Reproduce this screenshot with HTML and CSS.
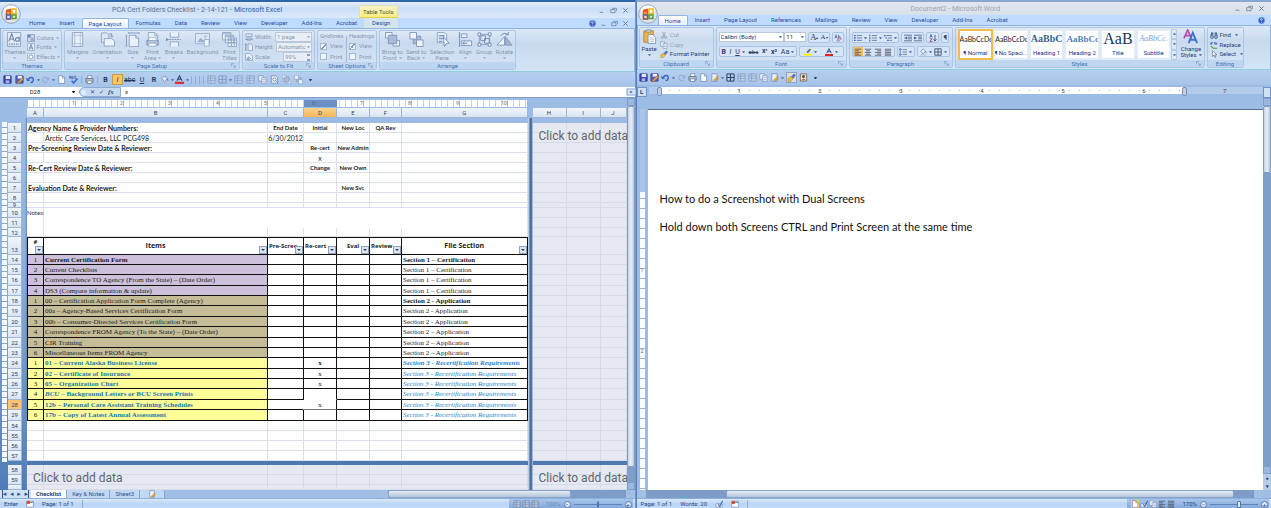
FILE: index.html
```html
<!DOCTYPE html>
<html lang="en">
<head>
<meta charset="utf-8">
<title>Dual screens</title>
<link rel="stylesheet" href="styles.css">
</head>
<body>
<svg class="defs" aria-hidden="true">
  <symbol id="orb" viewBox="0 0 20 20"><circle cx="10" cy="10" r="9.3" fill="#dfe5ee" stroke="#8793a8" stroke-width=".8"/><ellipse cx="10" cy="6" rx="7" ry="4.5" fill="#fff"/><path d="M5 6l5-1.500v4H5z" fill="#e2581d"/><path d="M5.500 6.500h4v3.500h-4zM5.500 11h4v4h-4z" fill="none" stroke="#e2581d" stroke-width="1.500"/><path d="M11 5h4v4.500h-4z" fill="none" stroke="#f6b51b" stroke-width="1.500"/><path d="M11 11h4v3.500h-4z" fill="none" stroke="#5a9a2c" stroke-width="1.500"/><path d="M5.500 11h4v4h-4z" fill="none" stroke="#3674c2" stroke-width="1.200"/></symbol>
  <symbol id="themes" viewBox="0 0 16 16"><path d="M.5.5h14v15H.5z" fill="#e2ebf6" stroke="#8fa6c6"/><path d="M2 10l3-8 3 8M3 7.500h4M13 5v5M13 7.500a2 2 0 1 0 0 1" fill="none" stroke="#7187ab" stroke-width="1.200"/><path d="M2 13h11" stroke="#8ea4c4" stroke-width="2" stroke-dasharray="1.500 1"/></symbol>
  <symbol id="colors" viewBox="0 0 9 9"><path d="M.5.5h8v8h-8z" fill="#c9d7e9" stroke="#8ba2c4"/><path d="M1 1h3v3H1z" fill="#6b83ab"/><path d="M4 4h4v4H4z" fill="#9bb1d0"/></symbol>
  <symbol id="fonts" viewBox="0 0 9 9"><path d="M.5.5h8v8h-8z" fill="#e4ecf7" stroke="#9db1cf"/><path d="M2.500 7.500l2-6 2 6M3 5.500h3" fill="none" stroke="#6d85ad"/></symbol>
  <symbol id="effects" viewBox="0 0 9 9"><path d="M.5.5h8v8h-8z" fill="#e4ecf7" stroke="#a5b7d2"/><circle cx="4.500" cy="4.500" r="2.300" fill="#fff" stroke="#7c92b7"/></symbol>
  <symbol id="margins" viewBox="0 0 16 16"><path d="M2.500.5h11v15h-11z" fill="#e6eef8" stroke="#8fa6c8"/><path d="M5 1v14M11 1v14M3 3.500h10M3 12.500h10" stroke="#a7bad6" stroke-width=".8"/></symbol>
  <symbol id="orient" viewBox="0 0 16 16"><path d="M1.500 1h6l2 2v8h-8z" fill="#dde8f5" stroke="#8fa6c8"/><path d="M4.500 7h8l3 2.500V15h-11z" fill="#edf3fa" stroke="#8fa6c8"/><path d="M10 2h2.500v3M12.500 5.500L11 4M12.500 5.500L14 4" fill="none" stroke="#7990b7"/></symbol>
  <symbol id="size" viewBox="0 0 16 16"><path d="M4.500 3.500h7l3 3v9h-10z" fill="#e8f0f9" stroke="#8fa6c8"/><path d="M4 1h11M1.500 4v11M4 0v2M15 0v2M.5 4h2M.5 15h2M11.500 3.500v3h3" fill="none" stroke="#849cc1"/></symbol>
  <symbol id="parea" viewBox="0 0 16 16"><path d="M3.500.5h7l3 3v9h-10z" fill="#e8f0f9" stroke="#8fa6c8"/><path d="M10.500 1v3h3" fill="none" stroke="#8fa6c8"/><path d="M2 9h12v5H2z" fill="#b6c5dc" stroke="#768fb5"/><path d="M4 6h8v3H4zM4 12h8v3H4z" fill="#fff" stroke="#8fa6c8" stroke-width=".8"/></symbol>
  <symbol id="breaks" viewBox="0 0 16 16"><path d="M4.500.5v5h9v-5M4.500 15.500v-5h9v5" fill="#e8f0f9" stroke="#8fa6c8"/><path d="M3 8h13" stroke="#7b93b9" stroke-dasharray="2 1"/><path d="M0 6l3 2-3 2z" fill="#7b93b9"/></symbol>
  <symbol id="backg" viewBox="0 0 16 16"><path d="M.5 1.500h15v11H.5z" fill="#dce7f4" stroke="#9aafce"/><path d="M2 11l4-5 3 3 2-2 3 4z" fill="#9cb0ce"/><circle cx="11" cy="5" r="1.500" fill="#b4c4dc"/><path d="M10 8h5v7h-5z" fill="#eef4fb" stroke="#8fa6c8" stroke-width=".8"/></symbol>
  <symbol id="ptitles" viewBox="0 0 16 16"><path d="M.5.5h9v8h-9zM3.500 3.500h9v8h-9zM6.500 6.500h9v9h-9z" fill="#e8f0f9" stroke="#8fa6c8"/><path d="M1 2h8M4 5h8M7 8.500h8M7 11.500h8M10 7v8M13 7v8" stroke="#8ba2c4"/></symbol>
  <symbol id="wide" viewBox="0 0 9 9"><path d="M1 1h7v3H1zM2 5.500h5V8H2z" fill="#e1eaf6" stroke="#8fa6c8"/><path d="M0 7h9" stroke="#7f96bb"/></symbol>
  <symbol id="tall" viewBox="0 0 9 9"><path d="M3.500 1h3l2 2v5.500h-5z" fill="#e8f0f9" stroke="#8fa6c8"/><path d="M1 1v7M0 1.500h2M0 8h2" stroke="#748cb3"/></symbol>
  <symbol id="scale" viewBox="0 0 9 9"><path d="M.5.5h5l3 3v5h-8z" fill="#e8f0f9" stroke="#8fa6c8"/><path d="M2 5h3v3H2z" fill="#8ba2c4"/><path d="M4 4l3 3" stroke="#6f88b0"/></symbol>
  <symbol id="front" viewBox="0 0 16 16"><path d="M.5.5h7v6h-7zM8.500 9h7v6h-7z" fill="#f0f5fb" stroke="#8097bc"/><path d="M3.500 3.500h9v9h-9z" fill="#a9bbd7" stroke="#8097bc"/></symbol>
  <symbol id="back" viewBox="0 0 16 16"><path d="M4.500 4.500h8v8h-8z" fill="#a9bbd7" stroke="#8097bc"/><path d="M1 .5h7v7H1zM8 8.500h7v7H8z" fill="#f0f5fb" stroke="#8097bc"/></symbol>
  <symbol id="pane" viewBox="0 0 16 16"><path d="M2.500.5h7l3 2v9h-10z" fill="#e6eef8" stroke="#8fa6c8"/><path d="M4 4h6M4 7h6M4 10h4" stroke="#849bc0" stroke-width="1.500"/><path d="M9 5l6 7-3 .5-2 3z" fill="#fff" stroke="#758eb5"/></symbol>
  <symbol id="align" viewBox="0 0 16 16"><path d="M1.500 0v16" stroke="#748cb3"/><path d="M3.500 2h6v4h-6zM3.500 9.500h11v5h-11z" fill="#e6eef8" stroke="#8299be"/><path d="M10 12H5m2-2l-2 2 2 2" fill="none" stroke="#7189b0"/></symbol>
  <symbol id="group" viewBox="0 0 16 16"><path d="M2.500 2.500h11v11h-11z" fill="none" stroke="#8ba2c4"/><path d="M4 4h5v5H4zM8 7h5v5H8z" fill="#dde8f4" stroke="#748cb3"/><path d="M1 1h3v3H1zM12 1h3v3h-3zM1 12h3v3H1zM12 12h3v3h-3z" fill="#f6f9fd" stroke="#748cb3"/></symbol>
  <symbol id="rotate" viewBox="0 0 16 16"><path d="M8 5v9H0z" fill="#f0f5fb" stroke="#8299be"/><path d="M9 5l7 9H9z" fill="#a1b4d1" stroke="#8299be"/><path d="M4 4a5 5 0 0 1 8-1M12 0v3H9" fill="none" stroke="#7189b0"/></symbol>
  <symbol id="save" viewBox="0 0 10 10"><path d="M1 1h8v8H1z" fill="#4248b4" stroke="#2c3190"/><path d="M3 1h5v3.500H3z" fill="#dfe7f8"/><path d="M3 6h4v3H3z" fill="#a9b8e3"/></symbol>
  <symbol id="saveas" viewBox="0 0 10 10"><path d="M1 1h8v8H1z" fill="#5b62ba" stroke="#3d4398"/><path d="M3 1h5v3H3z" fill="#e8edf8"/><path d="M2 9l6-6 1.500 1.500L4 9.500z" fill="#f2ad42" stroke="#8d5e26" stroke-width=".6"/></symbol>
  <symbol id="undo" viewBox="0 0 10 10"><path d="M2.500 5C4 2 9 2 8 6 7.500 7.500 6 8.500 5 8.500" fill="none" stroke="#3c65c7" stroke-width="1.600"/><path d="M0 3l1 4 4-1z" fill="#3c65c7"/></symbol>
  <symbol id="redo" viewBox="0 0 10 10"><path d="M7.500 4C6 2 2 2 2 5.500 2 8 5 9 7 8" fill="none" stroke="#93aed8" stroke-width="1.300"/><path d="M9 2v4H5.500z" fill="#93aed8"/></symbol>
  <symbol id="doc" viewBox="0 0 10 10"><path d="M2 .8h4l2.500 2.500v6H2z" fill="#fff" stroke="#6e87b3" stroke-width=".8"/><path d="M6 1v2.500h2.500" fill="none" stroke="#6e87b3" stroke-width=".8"/></symbol>
  <symbol id="spell" viewBox="0 0 10 10"><path d="M0 4l1-3 1 3M3 1v3h1.500V1M8 1.500H6.500V4H8" fill="none" stroke="#334f94" stroke-width=".8"/><path d="M3 6.500l2 2.500 4.500-5" fill="none" stroke="#3c69c9" stroke-width="1.700"/></symbol>
  <symbol id="eraser" viewBox="0 0 10 10"><path d="M1 5.500l1.500-4.500L4 5.500M1.500 4h2M5.500 1v4.500h2V3H5.500" fill="none" stroke="#455a86" stroke-width=".8"/><path d="M3 8l4-3.500 2.500 1.500L5.500 9.500z" fill="#e9a6bd" stroke="#7b6f98" stroke-width=".7"/></symbol>
  <symbol id="print" viewBox="0 0 10 10"><path d="M3 .8h4.500v3H3z" fill="#fff" stroke="#647894" stroke-width=".7"/><path d="M1 4h8v4H1z" fill="#bcc6d4" stroke="#54667f" stroke-width=".8"/><path d="M2.500 6.500h5v3h-5z" fill="#fff" stroke="#54667f" stroke-width=".7"/></symbol>
  <symbol id="bucket" viewBox="0 0 10 10"><path d="M2 4l3-3 3.500 3L5 7.500z" fill="#dfe8f4" stroke="#72849d" stroke-width=".8"/><path d="M8 4l1 2.500" stroke="#4c77bd"/><path d="M1 8.500h8" stroke="#b4c4dc" stroke-width="1.600"/></symbol>
  <symbol id="hl" viewBox="0 0 10 10"><path d="M3 5l4-4 2 1-4 4.500z" fill="#5b6b8a"/><path d="M0 8.500h10" stroke="#fff200" stroke-width="2.600"/></symbol>
  <symbol id="fcol" viewBox="0 0 10 10"><path d="M2.200 6.500L5 .8l2.800 5.700M3.300 4.600h3.400" fill="none" stroke="#31497c" stroke-width="1.200"/><path d="M0 8.700h10" stroke="#e42222" stroke-width="2.300"/></symbol>
  <symbol id="grid" viewBox="0 0 10 10"><path d="M1 1h8v8H1zM5 1v8M1 5h8" fill="none" stroke="currentColor"/></symbol>
  <symbol id="sheet" viewBox="0 0 10 10"><path d="M1 1h8v8H1z" fill="#c2d2e8" stroke="currentColor" stroke-width=".8"/><path d="M1 3.500h8M1 6h8M4 1v8" stroke="currentColor" stroke-width=".8"/></symbol>
  <symbol id="pages" viewBox="0 0 10 10"><path d="M.8.800h5v6h-5z" fill="#e9f0f9" stroke="#8095b7" stroke-width=".8"/><path d="M4 3h5v6.200H4z" fill="#f2f6fc" stroke="#8095b7" stroke-width=".8"/><path d="M5 5h3M5 7h3" stroke="#8095b7" stroke-width=".7"/></symbol>
  <symbol id="look" viewBox="0 0 10 10"><path d="M1.500.8h5l2 2v6.400h-7z" fill="#e8eef7" stroke="#7389ad" stroke-width=".8"/><circle cx="5" cy="5" r="1.800" fill="#fff" stroke="#7389ad"/><path d="M6.500 6.500l2.500 2.500" stroke="#7389ad"/></symbol>
  <symbol id="edit" viewBox="0 0 10 10"><path d="M2 .8h6v8.400H2z" fill="#e8eef7" stroke="#7389ad" stroke-width=".8"/><path d="M4 8l4-4 1.500 1.500L6 9z" fill="#efa839" stroke="#8b6b35" stroke-width=".5"/></symbol>
  <symbol id="paste" viewBox="0 0 14 16"><path d="M1 2h10v12H1z" fill="#edb453" stroke="#bb812d"/><path d="M3.500.8h5v2.500h-5z" fill="#d7dce5" stroke="#7c8797" stroke-width=".8"/><path d="M5.500 6h5l3 3v6.500h-8z" fill="#fff" stroke="#6d84ac" stroke-width=".8"/><path d="M7 9.500h5M7 11.500h5M7 13.500h5" stroke="#8fa6cb" stroke-width=".7"/></symbol>
  <symbol id="cut" viewBox="0 0 10 10"><path d="M3 1l3 6M7 1L4 7" stroke="#8f9bae" fill="none"/><circle cx="3" cy="8" r="1.300" fill="none" stroke="#8f9bae"/><circle cx="7" cy="8" r="1.300" fill="none" stroke="#8f9bae"/></symbol>
  <symbol id="brush" viewBox="0 0 10 10"><path d="M1 6l3-2 3 2-3 3.500H1z" fill="#f0bd43" stroke="#b18221" stroke-width=".6"/><path d="M5 4l3-3 1.500 1.500-2.500 3z" fill="#5b7bc0" stroke="#33508e" stroke-width=".6"/></symbol>
  <symbol id="bul" viewBox="0 0 10 10"><path d="M0 2h2M0 5h2M0 8h2" stroke="#3961b0" stroke-width="1.600"/><path d="M3.500 2H10M3.500 5H10M3.500 8H10" stroke="#5b6e8f"/></symbol>
  <symbol id="num" viewBox="0 0 10 10"><path d="M1 .8v2.400M1 4v2.400M1 7v2.400" stroke="#3961b0" stroke-width="1.200"/><path d="M3.500 2H10M3.500 5H10M3.500 8H10" stroke="#5b6e8f"/></symbol>
  <symbol id="multi" viewBox="0 0 10 10"><path d="M0 2h2M2 5h2M4 8h2" stroke="#3961b0" stroke-width="1.500"/><path d="M3 2h7M5 5h5M7 8h3" stroke="#5b6e8f"/></symbol>
  <symbol id="outdent" viewBox="0 0 10 10"><path d="M0 1.500h10M5 4h5M5 6h5M0 8.500h10" stroke="#46597b"/><path d="M4 3v4L0 5z" fill="#3467bd"/></symbol>
  <symbol id="indent" viewBox="0 0 10 10"><path d="M0 1.500h10M5 4h5M5 6h5M0 8.500h10" stroke="#46597b"/><path d="M0 3v4l4-2z" fill="#3467bd"/></symbol>
  <symbol id="sort" viewBox="0 0 10 10"><path d="M1 4.500l1.500-4 1.500 4M1.500 3.200h2" fill="none" stroke="#3467bd"/><path d="M1 6h3L1 9.300h3.500" fill="none" stroke="#8a3e9b"/><path d="M7.500 1v7M5.800 6.500L7.500 9l1.700-2.500" fill="none" stroke="#33456a"/></symbol>
  <symbol id="left" viewBox="0 0 10 10"><path d="M1 1.500h8M1 3.500h5M1 5.500h8M1 7.500h5M1 9h8" stroke="#4b5464"/></symbol>
  <symbol id="center" viewBox="0 0 10 10"><path d="M1 1.500h8M2.500 3.500h5M1 5.500h8M2.500 7.500h5M1 9h8" stroke="#4b5464"/></symbol>
  <symbol id="right" viewBox="0 0 10 10"><path d="M1 1.500h8M4 3.500h5M1 5.500h8M4 7.500h5M1 9h8" stroke="#4b5464"/></symbol>
  <symbol id="just" viewBox="0 0 10 10"><path d="M1 1.500h8M1 3.500h8M1 5.500h8M1 7.500h8M1 9h8" stroke="#4b5464"/></symbol>
  <symbol id="space" viewBox="0 0 10 10"><path d="M1.500 1v8M0 2.500L1.500.500 3 2.500M0 7.500l1.500 2 1.500-2" fill="none" stroke="#3467bd"/><path d="M4.500 2H10M4.500 5H10M4.500 8H10" stroke="#5b6e8f"/></symbol>
  <symbol id="find" viewBox="0 0 10 10"><path d="M2.500 1.500L1 6M7.500 1.500L9 6M3.500 2v4M6.500 2v4" stroke="#4d6c9d" stroke-width="1.500"/><circle cx="2.500" cy="7.500" r="1.800" fill="#b8cde9" stroke="#3b5787"/><circle cx="7.500" cy="7.500" r="1.800" fill="#b8cde9" stroke="#3b5787"/></symbol>
  <symbol id="repl" viewBox="0 0 10 10"><path d="M1 5V2h3M1 3.500h2M6 1v3h2.500V2.500H6" fill="none" stroke="#3d62a8"/><path d="M1 6.500l3 2.500h5" fill="none" stroke="#4c9b45" stroke-width="1.300"/></symbol>
  <symbol id="cursor" viewBox="0 0 10 10"><path d="M3 .8v7.400L5 6.500l1.500 3 1-.6L6 6h2.500z" fill="#fff" stroke="#506686" stroke-width=".8"/></symbol>
  <symbol id="chst" viewBox="0 0 16 16"><path d="M1 10L5 1l4 9M2.500 7h5" fill="none" stroke="#b44fb0" stroke-width="1.800"/><path d="M6 15l4.500-11L15 15M7.500 11.500h6" fill="none" stroke="#3b74c9" stroke-width="2"/></symbol>
  <symbol id="help" viewBox="0 0 10 10"><circle cx="5" cy="5" r="4.500" fill="#2e5fc8" stroke="#85a6e2" stroke-width=".8"/><path d="M3.500 4q0-2 1.700-1.700 2 .5 0 2.500v1M5 6.800v1.200" fill="none" stroke="#fff"/></symbol>
  <symbol id="min" viewBox="0 0 8 8"><path d="M2 6h4" stroke="#6c7f9c"/></symbol>
  <symbol id="max" viewBox="0 0 8 8"><path d="M2.500 1.500h5v3M.8 3h5v3.500h-5z" fill="none" stroke="#6c7f9c" stroke-width=".9"/></symbol>
  <symbol id="close" viewBox="0 0 8 8"><path d="M1.500 1.500l5 5M6.500 1.500l-5 5" stroke="#6c7f9c" stroke-width="1.100"/></symbol>
  <symbol id="launch" viewBox="0 0 6 6"><path d="M.5 4V.5H4" fill="none" stroke="#7b99c6" stroke-width=".8"/><path d="M2 2l3 3M5.200 3v2.200H3" fill="none" stroke="#7b99c6" stroke-width=".8"/></symbol>
  <symbol id="macro" viewBox="0 0 10 10"><path d="M.8 1.500h8.400v7.500H.8z" fill="#fff" stroke="#6681b0" stroke-width=".8"/><path d="M1 3h8" stroke="#7a96c6" stroke-width="1.500"/><circle cx="3" cy="3" r="2.200" fill="#dc492e"/></symbol>
  <symbol id="stamp" viewBox="0 0 10 10"><path d="M1.500 1h7v8h-7z" fill="#f3e3c8" stroke="#5d5560" stroke-width=".8"/><circle cx="5" cy="3.800" r="1.700" fill="#6b4a3a"/><path d="M2.500 8q2.500-3.500 5 0z" fill="#c8502f"/></symbol>
  <symbol id="proof" viewBox="0 0 10 10"><path d="M1 5q2-1.500 4 0 2-1.500 4 0v4H1z" fill="#e9f0fa" stroke="#6881ad" stroke-width=".8"/><path d="M4 5.500L6 8l3.500-7" fill="none" stroke="#3c62b6" stroke-width="1.300"/></symbol>
</svg>

<main class="desk">
<section class="win excel">
  <header class="title">
    <button class="orb" aria-label="Office button"><svg><use href="#orb"/></svg></button>
    <h1>PCA Cert Folders Checklist - 2-14-121 - <b>Microsoft Excel</b></h1>
    <span class="tools">Table Tools</span>
    <div class="ctl"><button aria-label="Minimize"><svg><use href="#min"/></svg></button><button aria-label="Restore"><svg><use href="#max"/></svg></button><button aria-label="Close"><svg><use href="#close"/></svg></button></div>
  </header>
  <nav class="tabs">
    <a href="#">Home</a><a href="#">Insert</a><a href="#" class="on">Page Layout</a><a href="#">Formulas</a><a href="#">Data</a><a href="#">Review</a><a href="#">View</a><a href="#">Developer</a><a href="#">Add-Ins</a><a href="#">Acrobat</a><a href="#" class="design">Design</a>
    <div class="ctl"><button aria-label="Help"><svg><use href="#help"/></svg></button><button aria-label="Minimize workbook"><svg><use href="#min"/></svg></button><button aria-label="Restore workbook"><svg><use href="#max"/></svg></button><button aria-label="Close workbook"><svg><use href="#close"/></svg></button></div>
  </nav>
  <div class="ribbon off">
    <div class="grp g-themes"><div class="in">
      <button class="big"><svg><use href="#themes"/></svg>Themes<i class="dd"></i></button>
      <div class="stack"><button><svg><use href="#colors"/></svg>Colors<i class="dd"></i></button><button><svg><use href="#fonts"/></svg>Fonts<i class="dd"></i></button><button><svg><use href="#effects"/></svg>Effects<i class="dd"></i></button></div>
    </div><footer>Themes</footer></div>
    <div class="grp g-setup"><div class="in spread">
      <button class="big"><svg><use href="#margins"/></svg>Margins<i class="dd"></i></button>
      <button class="big"><svg><use href="#orient"/></svg>Orientation<i class="dd"></i></button>
      <button class="big"><svg><use href="#size"/></svg>Size<i class="dd"></i></button>
      <button class="big"><svg><use href="#parea"/></svg>Print<span>Area<i class="dd"></i></span></button>
      <button class="big"><svg><use href="#breaks"/></svg>Breaks<i class="dd"></i></button>
      <button class="big"><svg><use href="#backg"/></svg>Background</button>
      <button class="big"><svg><use href="#ptitles"/></svg>Print<span>Titles</span></button>
    </div><footer>Page Setup<svg><use href="#launch"/></svg></footer></div>
    <div class="grp g-scale"><div class="in stack">
      <div class="field"><svg><use href="#wide"/></svg><label for="fw">Width:</label><span class="sel"><select id="fw"><option>1 page</option></select><i class="dd"></i></span></div>
      <div class="field"><svg><use href="#tall"/></svg><label for="fh">Height:</label><span class="sel"><select id="fh"><option>Automatic</option></select><i class="dd"></i></span></div>
      <div class="field"><svg><use href="#scale"/></svg><label for="fs">Scale:</label><span class="sel short"><input id="fs" value="99%"><i class="spin"></i></span></div>
    </div><footer>Scale to Fit<svg><use href="#launch"/></svg></footer></div>
    <div class="grp g-opts"><div class="in">
      <fieldset><legend>Gridlines</legend><label><input type="checkbox" checked>View</label><label><input type="checkbox">Print</label></fieldset>
      <fieldset><legend>Headings</legend><label><input type="checkbox" checked>View</label><label><input type="checkbox">Print</label></fieldset>
    </div><footer>Sheet Options<svg><use href="#launch"/></svg></footer></div>
    <div class="grp g-arr"><div class="in spread">
      <button class="big"><svg><use href="#front"/></svg>Bring to<span>Front<i class="dd"></i></span></button>
      <button class="big"><svg><use href="#back"/></svg>Send to<span>Back<i class="dd"></i></span></button>
      <button class="big"><svg><use href="#pane"/></svg>Selection<span>Pane</span></button>
      <button class="big"><svg><use href="#align"/></svg>Align<i class="dd"></i></button>
      <button class="big"><svg><use href="#group"/></svg>Group<i class="dd"></i></button>
      <button class="big"><svg><use href="#rotate"/></svg>Rotate<i class="dd"></i></button>
    </div><footer>Arrange</footer></div>
  </div>
  <div class="qat">
    <button aria-label="Save"><svg><use href="#save"/></svg></button><button aria-label="Save as"><svg><use href="#saveas"/></svg></button><button aria-label="Undo"><svg><use href="#undo"/></svg><i class="dd"></i></button><button aria-label="Redo"><svg><use href="#redo"/></svg><i class="dd"></i></button><button aria-label="New"><svg><use href="#doc"/></svg></button><button aria-label="Spelling"><svg><use href="#spell"/></svg></button><i class="bar"></i><button class="dim" aria-label="Print"><svg><use href="#print"/></svg></button><i class="bar"></i><button><b>B</b></button><button class="hot"><i>I</i></button><button><s>abc</s></button><button><u>U</u></button><button><b>R</b></button><button class="dim" aria-label="Fill"><svg><use href="#bucket"/></svg><i class="dd"></i></button><button aria-label="Font colour"><svg><use href="#fcol"/></svg><i class="dd"></i></button><i class="bar"></i><i class="bar"></i><i class="bar"></i><i class="bar"></i><button class="dim" aria-label="Table"><svg><use href="#sheet"/></svg></button><button class="dim" aria-label="Borders"><svg><use href="#grid"/></svg><i class="dd"></i></button><button class="dim" aria-label="Insert row"><svg><use href="#sheet"/></svg></button><button class="dim" aria-label="Insert column"><svg><use href="#sheet"/></svg></button><button class="dim" aria-label="Copy"><svg><use href="#pages"/></svg></button><button class="dim" aria-label="Preview"><svg><use href="#look"/></svg></button><button class="dim" aria-label="Forward"><svg><use href="#front"/></svg></button><button class="dim" aria-label="Backward"><svg><use href="#back"/></svg></button><i class="dd more"></i>
  </div>
  <div class="fx">
    <input class="name" aria-label="Name box" value="D28"><i class="dd"></i>
    <div class="pill"><span class="knob"></span><button>✕</button><button>✓</button><button><em>fx</em></button></div>
    <input class="val" aria-label="Formula" value="x"><button class="exp" aria-label="Expand">»</button>
  </div>
  <div class="body">
    <div class="vrule"></div>
    <div class="pane">
      <div class="hrule"><span>1|</span><span>2|</span><span>3|</span><span>4|</span><span>5|</span><span>6|</span><span>7|</span><span>8|</span><span>9|</span><span>10|</span></div>
      <table class="sheet">
        <colgroup><col class="c-row"><col class="c-gap"><col class="c-a"><col class="c-b"><col class="c-c"><col class="c-d"><col class="c-d"><col class="c-f"><col><col class="c-gap"><col class="c-h"><col class="c-h"><col class="c-j"></colgroup>
        <thead><tr><td></td><td></td><th>A</th><th>B</th><th>C</th><th class="picked">D</th><th>E</th><th>F</th><th>G</th><td></td><th>H</th><th>I</th><th>J</th></tr></thead>
        <tbody>
        <tr class="air"><td></td><td class="edge" rowspan="38"></td><td colspan="7"></td><td class="edge dark" rowspan="38"></td><td colspan="3"></td></tr>
        <tr class="i"><th>1</th><td class="t">Agency Name &amp; Provider Numbers:</td><td></td><td>End Date</td><td>Initial</td><td>New Loc</td><td>QA Rev</td><td></td><td><span class="add">Click to add data</span></td><td></td><td></td></tr>
        <tr class="i n"><th>2</th><td></td><td>Arctic Care Services, LLC PCG498</td><td>6/30/2012</td><td></td><td></td><td></td><td></td><td></td><td></td><td></td></tr>
        <tr class="i"><th>3</th><td class="t">Pre-Screening Review Date &amp; Reviewer:</td><td></td><td></td><td>Re-cert</td><td>New Admin</td><td></td><td></td><td></td><td></td><td></td></tr>
        <tr class="i n"><th>4</th><td></td><td></td><td></td><td>x</td><td></td><td></td><td></td><td></td><td></td><td></td></tr>
        <tr class="i"><th>5</th><td class="t">Re-Cert Review Date &amp; Reviewer:</td><td></td><td></td><td>Change</td><td>New Own</td><td></td><td></td><td></td><td></td><td></td></tr>
        <tr class="i"><th>6</th><td></td><td></td><td></td><td></td><td></td><td></td><td></td><td></td><td></td><td></td></tr>
        <tr class="i"><th>7</th><td class="t">Evaluation Date &amp; Reviewer:</td><td></td><td></td><td></td><td>New Svc</td><td></td><td></td><td></td><td></td><td></td></tr>
        <tr class="i"><th>8</th><td></td><td></td><td></td><td></td><td></td><td></td><td></td><td></td><td></td><td></td></tr>
        <tr class="tiny"><th><span>9</span></th><td></td><td></td><td></td><td></td><td></td><td></td><td></td><td></td><td></td><td></td></tr>
        <tr class="notes"><th>10</th><td>Notes:</td><td colspan="6"></td><td></td><td></td><td></td></tr>
        <tr class="notes"><th>11</th><td></td><td colspan="6"></td><td></td><td></td><td></td></tr>
        <tr class="nine"><th>12</th><td></td><td></td><td></td><td></td><td></td><td></td><td></td><td></td><td></td><td></td></tr>
        <tr class="head"><th>13</th><td class="hash">#<button aria-label="Filter #"></button></td><td>Items<button aria-label="Filter items"></button></td><td class="l">Pre-Scree<button aria-label="Filter pre-screen"></button></td><td class="l">Re-cert<button aria-label="Filter re-cert"></button></td><td class="s">Eval<button aria-label="Filter eval"></button></td><td class="l">Review<button aria-label="Filter review"></button></td><td>File Section<button aria-label="Filter section"></button></td><td></td><td></td><td></td></tr>
        <tr class="ls p bold"><th>14</th><td>1</td><td>Current Certification Form</td><td></td><td></td><td></td><td></td><td>Section 1 – Certification</td><td></td><td></td><td></td></tr>
        <tr class="ls p"><th>15</th><td>2</td><td>Current Checklists</td><td></td><td></td><td></td><td></td><td>Section 1 – Certification</td><td></td><td></td><td></td></tr>
        <tr class="ls p"><th>16</th><td>3</td><td>Correspondence TO Agency (From the State) – (Date Order)</td><td></td><td></td><td></td><td></td><td>Section 1 – Certification</td><td></td><td></td><td></td></tr>
        <tr class="ls p"><th>17</th><td>4</td><td>DS3 (Compare information &amp; update)</td><td></td><td></td><td></td><td></td><td>Section 1 – Certification</td><td></td><td></td><td></td></tr>
        <tr class="ls o secb"><th>18</th><td>1</td><td>00 – Certification Application Form Complete (Agency)</td><td></td><td></td><td></td><td></td><td>Section 2 - Application</td><td></td><td></td><td></td></tr>
        <tr class="ls o"><th>19</th><td>2</td><td>00a – Agency-Based Services Certification Form</td><td></td><td></td><td></td><td></td><td>Section 2 - Application</td><td></td><td></td><td></td></tr>
        <tr class="ls o"><th>20</th><td>3</td><td>00b – Consumer-Directed Services Certification Form</td><td></td><td></td><td></td><td></td><td>Section 2 - Application</td><td></td><td></td><td></td></tr>
        <tr class="ls o"><th>21</th><td>4</td><td>Correspondence FROM Agency (To the State) – (Date Order)</td><td></td><td></td><td></td><td></td><td>Section 2 – Application</td><td></td><td></td><td></td></tr>
        <tr class="ls o"><th>22</th><td>5</td><td>CIR Training</td><td></td><td></td><td></td><td></td><td>Section 2 – Application</td><td></td><td></td><td></td></tr>
        <tr class="ls o"><th>23</th><td>6</td><td>Miscellaneous Items FROM Agency</td><td></td><td></td><td></td><td></td><td>Section 2 – Application</td><td></td><td></td><td></td></tr>
        <tr class="ls y secb"><th>24</th><td>1</td><td>01 – Current Alaska Business License</td><td></td><td><b>x</b></td><td></td><td></td><td>Section 3 - Recertification Requirements</td><td></td><td></td><td></td></tr>
        <tr class="ls y"><th>25</th><td>2</td><td>02 – Certificate of Insurance</td><td></td><td>x</td><td></td><td></td><td>Section 3 - Recertification Requirements</td><td></td><td></td><td></td></tr>
        <tr class="ls y"><th>26</th><td>3</td><td>05 – Organization Chart</td><td></td><td>x</td><td></td><td></td><td>Section 3 - Recertification Requirements</td><td></td><td></td><td></td></tr>
        <tr class="ls y above"><th>27</th><td>4</td><td><em>BCU</em> – Background Letters or BCU Screen Prints</td><td></td><td></td><td></td><td></td><td>Section 3 - Recertification Requirements</td><td></td><td></td><td></td></tr>
        <tr class="ls y cur"><th>28</th><td>5</td><td>12b – Personal Care Assistant Training Schedules</td><td></td><td>x</td><td></td><td></td><td>Section 3 - Recertification Requirements</td><td></td><td></td><td></td></tr>
        <tr class="ls y"><th>29</th><td>6</td><td>17b – Copy of Latest Annual Assessment</td><td></td><td></td><td></td><td></td><td>Section 3 - Recertification Requirements</td><td></td><td></td><td></td></tr>
        <tr class="i"><th>54</th><td></td><td></td><td></td><td></td><td></td><td></td><td></td><td></td><td></td><td></td></tr>
        <tr class="i"><th>55</th><td></td><td></td><td></td><td></td><td></td><td></td><td></td><td></td><td></td><td></td></tr>
        <tr class="i"><th>56</th><td></td><td></td><td></td><td></td><td></td><td></td><td></td><td></td><td></td><td></td></tr>
        <tr class="i"><th>57</th><td></td><td></td><td></td><td></td><td></td><td></td><td></td><td></td><td></td><td></td></tr>
        <tr class="split"><td></td><td colspan="7"></td><td colspan="3"></td></tr>
        <tr class="i next"><th>58</th><td><span class="add">Click to add data</span></td><td></td><td></td><td></td><td></td><td></td><td></td><td><span class="add">Click to add data</span></td><td></td><td></td></tr>
        <tr class="i next"><th>59</th><td></td><td></td><td></td><td></td><td></td><td></td><td></td><td></td><td></td><td></td></tr>
        <tr class="tiny next"><th></th><td></td><td></td><td></td><td></td><td></td><td></td><td></td><td></td><td></td><td></td></tr>
        </tbody>
      </table>
    </div>
    <div class="vbar"><i class="up"></i><i class="thumb"></i><i class="track"></i><i class="down"></i></div>
  </div>
  <div class="foot">
    <div class="nav"><button aria-label="First sheet">◂</button><button aria-label="Previous sheet">◂</button><button aria-label="Next sheet">▸</button><button aria-label="Last sheet">▸</button></div>
    <a href="#" class="st on">Checklist</a><a href="#" class="st">Key &amp; Notes</a><a href="#" class="st">Sheet3</a><a href="#" class="st" aria-label="Insert sheet"><svg><use href="#edit"/></svg></a>
    <div class="hbar"><i class="la"></i><i class="thumb"></i><i class="track"></i><i class="ra"></i></div>
  </div>
  <footer class="status"><span>Enter</span><svg><use href="#macro"/></svg><span>Page: 1 of 1</span><i class="bar"></i>
    <div class="zoom"><span class="views"><svg><use href="#sheet"/></svg><svg><use href="#sheet"/></svg><svg><use href="#sheet"/></svg></span><span class="faint">100%</span><button>−</button><input type="range" aria-label="Zoom" disabled><button>+</button></div>
  </footer>
</section>

<section class="win word">
  <header class="title">
    <button class="orb" aria-label="Office button"><svg><use href="#orb"/></svg></button>
    <h1>Document2 - Microsoft Word</h1>
    <div class="ctl"><button aria-label="Minimize"><svg><use href="#min"/></svg></button><button aria-label="Restore"><svg><use href="#max"/></svg></button><button aria-label="Close"><svg><use href="#close"/></svg></button></div>
  </header>
  <nav class="tabs">
    <a href="#" class="on">Home</a><a href="#">Insert</a><a href="#">Page Layout</a><a href="#">References</a><a href="#">Mailings</a><a href="#">Review</a><a href="#">View</a><a href="#">Developer</a><a href="#">Add-Ins</a><a href="#">Acrobat</a>
    <div class="ctl"><button aria-label="Help"><svg><use href="#help"/></svg></button></div>
  </nav>
  <div class="ribbon">
    <div class="grp g-clip"><div class="in">
      <button class="big"><svg><use href="#paste"/></svg>Paste<i class="dd"></i></button>
      <div class="stack"><button class="gray"><svg><use href="#cut"/></svg>Cut</button><button class="gray"><svg><use href="#pages"/></svg>Copy</button><button><svg><use href="#brush"/></svg>Format Painter</button></div>
    </div><footer>Clipboard<svg><use href="#launch"/></svg></footer></div>
    <div class="grp g-font"><div class="in rows">
      <div class="line"><span class="sel face"><select aria-label="Font"><option>Calibri (Body)</option></select><i class="dd"></i></span><span class="sel size"><select aria-label="Font size"><option>11</option></select><i class="dd"></i></span><div class="set"><button class="aa">A<sup>▴</sup></button><button class="aa sm">A<sup>▾</sup></button></div><div class="set"><button aria-label="Clear formatting"><svg><use href="#eraser"/></svg></button></div></div>
      <div class="line"><div class="set wide"><button><b>B</b></button><button><i>I</i></button><button><u>U</u><i class="dd"></i></button><button><s>abc</s></button><button><b>x<sub>₂</sub></b></button><button><b>x²</b></button><button>Aa<i class="dd"></i></button></div><div class="set"><button aria-label="Highlight"><svg><use href="#hl"/></svg><i class="dd"></i></button><button aria-label="Font colour"><svg><use href="#fcol"/></svg><i class="dd"></i></button></div></div>
    </div><footer>Font<svg><use href="#launch"/></svg></footer></div>
    <div class="grp g-para"><div class="in rows">
      <div class="line"><div class="set"><button aria-label="Bullets"><svg><use href="#bul"/></svg><i class="dd"></i></button><button aria-label="Numbering"><svg><use href="#num"/></svg><i class="dd"></i></button><button aria-label="Multilevel list"><svg><use href="#multi"/></svg><i class="dd"></i></button></div><div class="set"><button aria-label="Decrease indent"><svg><use href="#outdent"/></svg></button><button aria-label="Increase indent"><svg><use href="#indent"/></svg></button></div><div class="set"><button aria-label="Sort"><svg><use href="#sort"/></svg></button></div><div class="set"><button><b>¶</b></button></div></div>
      <div class="line"><div class="set"><button class="hot" aria-label="Left"><svg><use href="#left"/></svg></button><button aria-label="Center"><svg><use href="#center"/></svg></button><button aria-label="Right"><svg><use href="#right"/></svg></button><button aria-label="Justify"><svg><use href="#just"/></svg></button></div><div class="set"><button aria-label="Line spacing"><svg><use href="#space"/></svg><i class="dd"></i></button></div><div class="set"><button aria-label="Shading"><svg><use href="#bucket"/></svg><i class="dd"></i></button><button class="dim" aria-label="Borders"><svg><use href="#grid"/></svg><i class="dd"></i></button></div></div>
    </div><footer>Paragraph<svg><use href="#launch"/></svg></footer></div>
    <div class="grp g-styles"><div class="in">
      <div class="gallery">
        <button class="on"><span>AaBbCcDc</span>¶ Normal</button><button><span>AaBbCcDc</span>¶ No Spaci...</button><button class="h1"><span>AaBbC</span>Heading 1</button><button class="h2"><span>AaBbCc</span>Heading 2</button><button class="tt"><span>AaB</span>Title</button><button class="sub"><span>AaBbCc.</span>Subtitle</button>
      </div>
      <div class="scroll"><button aria-label="Up"><i class="dd flip"></i></button><button aria-label="Down"><i class="dd"></i></button><button aria-label="More"><i class="dd"></i></button></div>
      <button class="big"><svg><use href="#chst"/></svg>Change<span>Styles<i class="dd"></i></span></button>
    </div><footer>Styles<svg><use href="#launch"/></svg></footer></div>
    <div class="grp g-edit"><div class="in stack"><button><svg><use href="#find"/></svg>Find<i class="dd"></i></button><button><svg><use href="#repl"/></svg>Replace</button><button><svg><use href="#cursor"/></svg>Select<i class="dd"></i></button></div><footer>Editing</footer></div>
  </div>
  <div class="qat">
    <button aria-label="Save"><svg><use href="#save"/></svg></button><button aria-label="Save as"><svg><use href="#saveas"/></svg></button><button aria-label="Undo"><svg><use href="#undo"/></svg><i class="dd"></i></button><button aria-label="Redo"><svg><use href="#redo"/></svg></button><button aria-label="Print"><svg><use href="#print"/></svg></button><button aria-label="New"><svg><use href="#doc"/></svg></button><button aria-label="Open"><svg><use href="#edit"/></svg><i class="dd"></i></button><button aria-label="Table"><svg><use href="#grid"/></svg></button><button class="dim" aria-label="Insert row"><svg><use href="#sheet"/></svg></button><button class="dim" aria-label="Insert column"><svg><use href="#sheet"/></svg></button><button aria-label="Copy"><svg><use href="#pages"/></svg></button><button aria-label="Edit"><svg><use href="#edit"/></svg><i class="dd"></i></button><button class="frame" aria-label="Paste"><svg><use href="#brush"/></svg></button><button aria-label="Stamp"><svg><use href="#stamp"/></svg></button><i class="dd more"></i>
  </div>
  <div class="wrule"><span class="corner">L</span><div class="scale"><i class="mark"></i><div class="live"><span>1</span><span>2</span><span>3</span><span>4</span><span>5</span><span>6</span></div><i class="mark"></i><span class="seven">7</span></div><i class="cap"></i></div>
  <div class="body">
    <div class="vrule"><i></i><span>1</span><span>2</span></div>
    <article class="page"><p>How to do a Screenshot with Dual Screens</p><p>Hold down both Screens CTRL and Print Screen at the same time</p></article>
    <div class="vbar"><i class="up"></i><i class="thumb"></i><i class="track"></i><i class="down"></i><b>●</b><b>▾</b></div>
  </div>
  <div class="foot"><div class="hbar"><i class="la"></i><i class="track"></i><i class="thumb"></i><i class="track end"></i><i class="ra"></i></div></div>
  <footer class="status"><span>Page: 1 of 1</span><span>Words: 20</span><svg><use href="#proof"/></svg><svg><use href="#macro"/></svg><i class="bar"></i>
    <div class="zoom"><span class="views"><svg class="hot"><use href="#doc"/></svg><svg><use href="#proof"/></svg><svg><use href="#pages"/></svg><svg><use href="#left"/></svg><svg><use href="#just"/></svg></span><span>170%</span><button>−</button><input type="range" aria-label="Zoom" value="62"><button>+</button></div>
  </footer>
</section>
</main>
</body>
</html>
```
FILE: styles.css
```css
* { box-sizing: border-box; }
body { margin: 0; font: 6px/8px Roboto, "Noto Sans", sans-serif; color: #24427c; background: #a3c1e8; }
button, input, select { font: inherit; color: inherit; border: 0; padding: 0; margin: 0; background: none; border-radius: 0; min-width: 0; }
a { color: inherit; text-decoration: none; }
svg { width: 10px; height: 10px; flex: none; display: block; }
.defs { display: none; }
.desk { display: grid; grid-template-columns: 1fr 1fr; height: 100vh; }
.win { display: flex; flex-direction: column; min-width: 0; position: relative; border-top: 2px solid #2f66ab; border-right: 1px solid #6f97ca; }
.word { border-top-color: #86a8d3; border-left: 1px solid #5b7fb8; border-right: 0; }
.dd { display: inline-block; flex: none; border: 1px solid transparent; border-top: 2px solid #6680ab; border-bottom: 0; width: 3px; height: 2px; margin-left: 2px; }
.dd.flip { transform: rotate(180deg); }

/* Title bar and tabs */
.title { height: 16px; flex: none; display: flex; align-items: center; background: linear-gradient(#e4eefb, #cadef7 40%, #dbe9fb); color: #66748c; }
.title h1 { font: inherit; margin: 0; font-size: 7px; white-space: nowrap; }
.title h1 b { font-weight: 400; color: #2d5fae; }
.excel h1 { width: 247px; margin-left: 112px; }
.word .title { height: 13px; background: linear-gradient(#e2e7ee, #d6e0ec); color: #9ba4b1; }
.word h1 { margin-left: 274px; }
.orb { position: absolute; left: 1px; top: 2px; }
.orb svg { width: 20px; height: 20px; }
.tools { align-self: stretch; margin: 3px 0 0; padding: 2px 3px; background: linear-gradient(#f5f1c9, #fbee7e); border: 1px solid #dfe0b8; border-bottom: 1px solid #e5cf4c; color: #4c5c3c; white-space: nowrap; }
.ctl { margin-left: auto; display: flex; gap: 5px; padding-right: 6px; }
.ctl svg { width: 7px; height: 7px; }
.tabs { height: 10px; flex: none; display: flex; align-items: stretch; padding-left: 22px; background: #bfdbff; color: #274e9a; line-height: 10px; white-space: nowrap; }
.word .tabs { padding-left: 21px; }
.tabs a { padding: 0 7px; }
.tabs a.on { background: linear-gradient(#fff, #e5effb); border: 1px solid #94b5de; border-bottom: 0; border-radius: 2px 2px 0 0; line-height: 9px; padding: 0 6px; }
.tabs .design { background: #d4e5ee; padding: 0 8px; }
.tabs .ctl { gap: 4px; padding-right: 6px; align-items: center; }

/* Ribbon */
.ribbon { height: 44px; flex: none; display: flex; gap: 2px; padding: 1px; background: linear-gradient(#dbe7f5, #c9daef 35%, #d3e4f5); border: 1px solid #8eb4df; border-bottom-color: #8fd0e0; }
.word .ribbon { height: 45px; }
.grp { display: flex; flex-direction: column; flex: none; border: 1px solid #abc6e6; border-radius: 2px; overflow: hidden; background: linear-gradient(#dde9f6, #cbdbef 30%, #d5e5f6); }
.grp footer { height: 7px; flex: none; line-height: 7px; background: #bfd6f1; color: #4572b2; text-align: center; position: relative; }
.grp footer svg { width: 5px; height: 5px; position: absolute; right: 3px; top: 1px; }
.in { flex: 1; display: flex; min-height: 0; padding: 1px 2px 0; gap: 3px; white-space: nowrap; }
.g-themes .in { gap: 1px; padding: 1px 1px 0; }
.spread { justify-content: space-between; gap: 0; }
.off .in { color: #8797b0; }
.off .dd { border-top-color: #a4b5cf; }
.g-themes { width: 60px; } .g-setup { width: 176px; } .g-scale { width: 73px; } .g-opts { width: 60px; } .g-arr { width: 137px; }
.g-clip { width: 75px; } .g-font { width: 131px; } .g-para { width: 104px; } .g-styles { width: 250px; } .g-edit { width: 37px; }
.big { display: flex; flex-direction: column; align-items: center; line-height: 6px; flex: none; }
.big svg { width: 15px; height: 15px; margin-bottom: 2px; }
.big > .dd { margin: 2px 0 0; }
.big > span .dd { vertical-align: middle; }
.stack { display: flex; flex-direction: column; justify-content: space-evenly; gap: 0; }
.stack button, .field { display: flex; align-items: center; gap: 2px; }
.stack svg { width: 8px; height: 8px; }
.g-themes .stack .dd { margin-left: 0; }
.gray { color: #94a1b5; }
.field label { flex: 1; }
.sel { display: flex; align-items: center; background: #e9eef5; border: 1px solid #b8c9df; height: 10px; padding: 0 1px; width: 37px; }
.sel .dd { margin-left: 0; }
.sel select, .sel input { flex: 1; width: 100%; appearance: none; line-height: 8px; height: 8px; }
.sel.short { width: 29px; }
.spin { width: 3px; height: 7px; border-top: 2px solid #8ea2c0; border-bottom: 2px solid #8ea2c0; }
fieldset { border: 0; margin: 0; padding: 0; display: flex; flex-direction: column; min-width: 0; flex: 1; }
fieldset + fieldset { border-left: 1px solid #9db8da; padding-left: 2px; }
.g-opts .in { gap: 1px; }
legend { padding: 0; line-height: 8px; margin-bottom: 1px; }
fieldset label { display: flex; align-items: center; gap: 3px; height: 11px; }
input[type=checkbox] { appearance: none; width: 7px; height: 7px; background: #eef3f9; border: 1px solid #a9b9cf; }
input[type=checkbox]:checked { background: linear-gradient(135deg, #eef3f9 40%, #8294b1 40%, #8294b1 60%, #eef3f9 60%); }
.rows { flex-direction: column; justify-content: space-evenly; gap: 0; }
.line { display: flex; gap: 2px; }
.set { display: flex; border: 1px solid #a9c3e4; border-radius: 2px; background: #d6e5f7; height: 11px; flex: 1 0 auto; justify-content: space-around; }
.set button { display: flex; align-items: center; padding: 0 1px; font-size: 7px; color: #2f4265; }
.set svg { width: 8px; height: 8px; }
.set .hot { background: #fbbd5e; }
.set s { font-size: 6px; }
.set .aa { font: 9px/9px "Liberation Serif", serif; }
.set .sm { font-size: 7px; }
sup, sub { font-size: 4px; line-height: 4px; vertical-align: super; }
.face { width: 67px; background: #fff; color: #1c2e4f; margin-right: -2px; }
.word .size { width: 22px; background: #fff; color: #1c2e4f; }
.gallery { display: grid; grid-template-columns: repeat(6, 1fr); flex: 1; background: #dfeaf7; min-width: 0; }
.gallery button { background: #fff; border: 1px solid #e4ecf6; margin: 1px; overflow: hidden; display: flex; flex-direction: column; align-items: center; justify-content: space-between; color: #2b2f7c; padding: 1px 0; line-height: 8px; white-space: nowrap; }
.gallery span { font: 7px/14px Lato, sans-serif; color: #222; max-width: 100%; overflow: hidden; }
.gallery .on { border: 2px solid #f3bc4f; margin: 0; }
.gallery .h1 span { font: bold 10px/14px "Liberation Serif", serif; color: #365f91; }
.gallery .h2 span { font: bold 9px/14px "Liberation Serif", serif; color: #4f81bd; }
.gallery .tt span { font: 16px/14px "Liberation Serif", serif; color: #17365d; }
.gallery .sub span { font: italic 8px/14px "Liberation Serif", serif; color: #7ba0d0; }
.scroll { display: grid; width: 6px; margin-left: -3px; }
.scroll button { border: 1px solid #b5cbe7; display: flex; align-items: center; justify-content: center; background: #dce9f8; }
.scroll .dd { margin: 0; }

/* Quick access bar */
.qat { height: 15px; flex: none; display: flex; align-items: center; gap: 1px; padding: 0 2px; background: linear-gradient(#b5cfee, #a6c3e8); color: #23375c; font-size: 7px; }
.qat button { display: flex; align-items: center; justify-content: center; min-width: 9px; height: 11px; }
.excel .qat button { min-width: 11px; }
.excel .qat .bar { margin: 0 1px; }
.word .qat { gap: 2px; }
.qat svg { width: 9px; height: 9px; }
.qat .hot { background: #fbc55f; border: 1px solid #c79a50; }
.qat .dim { color: #7d9ac6; }
.qat .frame { background: #d9dfe2; border: 1px solid #8fa5c5; }
.bar { width: 1px; height: 8px; background: #8fb0dc; }
.more { border-top-color: #23375c; margin-left: 4px; }

/* Formula bar */
.fx { height: 11px; flex: none; display: flex; align-items: center; background: #fff; border-bottom: 1px solid #7f9ec9; color: #222; }
.name { width: 70px; text-align: center; }
.fx > .dd { border-top-color: #111; margin: 0 4px 0 2px; }
.pill { display: flex; align-items: center; gap: 4px; width: 42px; height: 10px; border-radius: 5px 0 0 5px; background: #c6d9f1; border: 1px solid #8eabd3; color: #35507d; }
.pill button { line-height: 8px; }
.knob { width: 5px; height: 5px; border-radius: 50%; background: #e2ecf8; margin-left: 1px; }
.pill em { font: italic bold 7px/8px "Liberation Serif", serif; }
.val { flex: 1; padding-left: 4px; }
.exp { width: 7px; height: 10px; background: #d3e3f7; border: 1px solid #8eabd3; transform: rotate(90deg); line-height: 7px; }

/* Sheet area */
.body { flex: 1; min-height: 0; display: flex; }
.excel .body { background: linear-gradient(#9dbce5, #8fb1de 40%, #4f7cb8); padding-left: 2px; }
.excel .vrule { width: 5px; margin: 24px 1px 28px 0; background: repeating-linear-gradient(#f6f9fd 0 5px, #91a4bf 5px 6px); }
.pane { flex: 1; min-width: 0; padding-top: 2px; overflow: hidden; }
.hrule { height: 7px; margin: 0 100px 1px 20px; display: flex; color: #666; font-size: 5px; line-height: 7px; background: linear-gradient(90deg, transparent 276px, #6a8fc4 276px 309px, transparent 309px), repeating-linear-gradient(90deg, #fff 0 5px, #c9d2df 5px 6px); }
.hrule span { width: 48px; text-align: right; flex: none; }
.sheet { width: 100%; table-layout: fixed; border-collapse: separate; border-spacing: 0; color: #222; line-height: 8px; }
.c-row { width: 14px; } .c-gap { width: 5px; } .c-a { width: 17px; } .c-b { width: 224px; } .c-c { width: 36px; } .c-d { width: 33px; } .c-f { width: 32px; } .c-h { width: 34px; } .c-j { width: 26px; }
.sheet td, .sheet th { padding: 0; height: 10px; white-space: nowrap; font-weight: 400; text-align: center; }
.sheet th { background: linear-gradient(#f1f5fa, #d9e4f1); border-right: 1px solid #9eb6d7; border-bottom: 1px solid #9eb6d7; color: #33445f; }
.sheet .picked { background: linear-gradient(#f9d28a, #f2b75b); }
.sheet .air td { height: 5px; }
.sheet .edge { background: linear-gradient(90deg, transparent 3px, #5f89c2); }
.sheet .dark { background: linear-gradient(90deg, #bccbe0 1px, #3d6494 2px, #5b82b5 4px, #dfe5f0); }
.i td, .tiny td, .notes td, .nine td, .head td, .ls td { background: #fff; border-right: 1px solid #dbe0ee; border-bottom: 1px solid #dbe0ee; }
.sheet .i td { font: 700 6px/8px Lato, sans-serif; }
.sheet .n td { font-weight: 400; font-size: 7px; }
.sheet .i .t { text-align: left; padding-left: 1px; font-size: 7px; border-right: 0; }
.sheet .n td:nth-child(3) { text-align: left; padding-left: 1px; }
.sheet .tiny td, .sheet .tiny th { height: 5px; line-height: 3px; }
.tiny span { display: block; height: 4px; overflow: hidden; }
.sheet .nine td, .sheet .nine th { height: 9px; line-height: 7px; }
.sheet .notes td { color: #4a2550; font: 6px/8px Lato, sans-serif; border-bottom-color: #fff; }
.sheet .head td { height: 18px; position: relative; font: bold 7px/8px "Open Sans", sans-serif; }
.sheet .head th { vertical-align: bottom; }
.sheet .head td.l, .sheet .head td.s { font-size: 6px; }
.sheet .head td.l { text-align: left; padding-left: 1px; }
.sheet .head .hash { vertical-align: top; font-size: 6px; }
.head button { position: absolute; right: 0; bottom: 0; width: 8px; height: 8px; background: #dce6f3; border: 1px solid #8ea1bd; }
.head button::after { content: ""; position: absolute; left: 1px; top: 2px; border: 2px solid transparent; border-top-color: #2b3f6b; border-bottom: 0; }
.sheet .ls td { font-family: "Liberation Serif", serif; font-size: 7px; }
.ls td:nth-child(-n+8), .head td:nth-child(-n+8) { border-right: 1px solid #111; border-bottom: 1px solid #111; }
.head td:nth-child(-n+8) { border-top: 1px solid #111; }
.ls td:nth-child(2), .head td:nth-child(2) { border-left: 1px solid #111; }
.sheet .ls td:nth-child(3), .sheet .ls td:nth-child(8) { text-align: left; padding-left: 1px; }
.sheet .ls:nth-child(8n+1) > *, .sheet .ls:nth-child(8n+4) > *, .sheet .ls:nth-child(8n+6) > * { height: 11px; }
.p td:nth-child(-n+3) { background: #ccc0da; }
.o td:nth-child(-n+3) { background: #c4bd97; }
.y td:nth-child(-n+3) { background: #ffff99; }
.sheet .bold td:nth-child(n+3), .sheet .secb td:nth-child(8), .sheet .y td:nth-child(3) { font-weight: 700; }
.y td:nth-child(3) { color: #1a78a8; }
.y td:nth-child(8) { color: #2c86cd; font-style: italic; }
.sheet .cur th { background: #f9c477; }
.above td:nth-child(5) { border-bottom-color: #fff; }
.cur td:nth-child(4) { border-right-color: #fff; }
.cur td:nth-child(5) { border-bottom-color: #777; }
.split td { background: #4d78b0; }
.sheet .split td { height: 4px; }
.split td:first-child { background: none; }
.sheet tr:not(.air):not(.split) td:nth-child(n+9):not(.edge), .notes td:nth-last-child(-n+3), .sheet .next td { background: #e6e9f2; border-color: #d5dbe8; }
.sheet thead td { background: none !important; }
.i td:nth-child(9), .next td:nth-child(2) { position: relative; }
.add { position: absolute; z-index: 1; left: 6px; top: 5px; font: 12px/16px Roboto, sans-serif; color: #61656d; }
.vbar { width: 8px; flex: none; display: flex; flex-direction: column; background: #b5cbe8; align-items: center; }
.vbar i { width: 100%; }
.up, .down { height: 8px; background: #9cb8df; border: 1px solid #7d9dcb; }
.vbar .thumb { flex: 7; background: linear-gradient(90deg, #c6d3e4, #e9eff6, #b7c6da); border: 1px solid #849cbf; border-radius: 2px; }
.vbar .track { flex: 1; background: #7f9fc9; }
.excel .vbar .thumb { flex: 24; }

/* Sheet tabs, scroll bars, status */
.foot { height: 8px; flex: none; display: flex; background: #a0bde3; color: #30568f; line-height: 8px; white-space: nowrap; }
.nav { width: 31px; display: flex; justify-content: space-around; align-items: center; background: #d0e1f6; }
.nav button { font: 7px/8px "DejaVu Sans", sans-serif; }
.nav button:first-child { border-left: 1px solid #30568f; }
.nav button:last-child { border-right: 1px solid #30568f; }
.st { padding: 0 5px; background: #c2d7f1; border-right: 1px solid #86a6d2; }
.st.on { background: #fff; font-weight: 700; color: #1e3f74; }
.st svg { width: 8px; height: 8px; margin: 0 3px; }
.hbar { display: flex; width: 256px; margin-left: auto; background: #7d9cc7; }
.hbar .la, .hbar .ra { width: 9px; background: #a4bfe4; }
.hbar .thumb { flex: 10; background: linear-gradient(#e5edf6, #b3c4da); border: 1px solid #8ba3c6; border-radius: 2px; }
.hbar .track { flex: 3; }
.status { height: 11px; flex: none; display: flex; align-items: center; gap: 8px; padding: 0 2px 0 4px; background: linear-gradient(#dbe9fb, #b9d4f5 50%, #c8defa); color: #24427c; white-space: nowrap; border-top: 1px solid #8cb0de; }
.status svg { width: 8px; height: 8px; }
.zoom { margin-left: auto; display: flex; align-items: center; gap: 3px; padding: 0 1px 0 4px; height: 10px; background: linear-gradient(#a9c6ec, #7fa6da); }
.views { display: flex; gap: 1px; margin-right: 4px; color: #667c9e; }
.views .hot { background: #fbc55f; }
.faint { color: #7189b3; }
.zoom button { width: 7px; height: 7px; border-radius: 50%; background: #e4eefb; border: 1px solid #5377b0; line-height: 5px; }
.zoom input { appearance: none; width: 48px; height: 7px; background: linear-gradient(#5d81b8, #5d81b8) center / 100% 1px no-repeat; }
.zoom input::-webkit-slider-thumb { appearance: none; width: 4px; height: 7px; background: #e2ebf8; border: 1px solid #5276ad; border-radius: 1px; }
.zoom input:disabled::-webkit-slider-thumb { width: 1px; }

/* Word document */
.wrule { height: 13px; flex: none; display: flex; background: #9dbce5; padding-top: 2px; }
.corner { width: 10px; height: 10px; border: 1px solid #6f92c5; background: #cfdff4; text-align: center; margin-right: 2px; font-weight: 700; }
.scale { flex: 1; height: 7px; display: flex; background: #b3cbea; line-height: 7px; color: #444; padding-left: 10px; }
.live { flex: 1; display: grid; grid-template-columns: repeat(6, 81px); background: repeating-linear-gradient(90deg, transparent 0 9px, #a6b2c4 9px 10px) center / 100% 1px no-repeat, #fff; }
.live span { text-align: right; }
.mark { width: 5px; height: 9px; margin: 0 -2px; background: #c0cfe3; border: 1px solid #7890b5; border-radius: 2px; z-index: 1; }
.seven { width: 78px; padding-left: 38px; }
.cap { width: 8px; background: #cfdff4; border: 1px solid #6f92c5; }
.word .body { background: #9dbce5; }
.word .vrule { width: 5px; margin: 11px 3px 0 3px; background: repeating-linear-gradient(#f8fbff 0 9px, #a3b4cd 9px 10px); font-size: 5px; text-align: center; color: #666; }
.word .vrule i { display: block; height: 83px; background: #aac4e7; }
.word .vrule span { display: block; height: 81px; padding-top: 74px; }
.page { flex: 1; margin-top: 11px; background: #fff; border-top: 1px solid #5b6f90; padding: 80px 12px 0; color: #111; font: 11px/18px Lato, sans-serif; }
.page p { margin: 0 0 10px; }
.word .vbar .thumb { flex: 2; }
.word .vbar .track { flex: 9; background: #7f9fc9; }
.word .vbar b { font-size: 5px; }
.word .hbar { width: auto; flex: 1; margin-right: 8px; }
.word .hbar .thumb { flex: 25; }
.word .hbar .track { flex: 4; }
.word .hbar .end { flex: 1; }
```
